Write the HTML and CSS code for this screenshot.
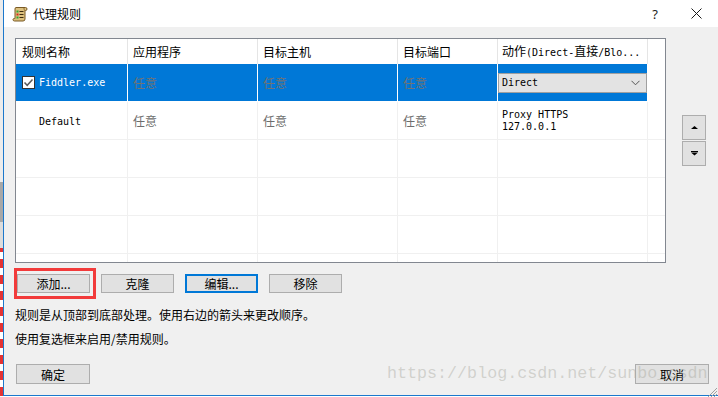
FILE: index.html
```html
<!DOCTYPE html>
<html lang="zh-CN">
<head>
<meta charset="utf-8">
<title>代理规则</title>
<link rel="stylesheet" href="styles.css">
</head>
<body>
<div class="window">
  <div class="titlebar">
    <svg class="appicon" width="16" height="16" viewBox="0 0 16 16">
      <path d="M4 1.5 H13.5 Q15 1.5 15 3 Q15 4.5 13.5 4.5 H13 V13 Q13 15 11 15 H2.5 Q1 15 1 13.5 Q1 12.5 2.5 12.5 H3 V3 Q3 1.5 4 1.5 Z" fill="#dcc07e" stroke="#7a5a24" stroke-width="1"/>
      <path d="M12 1.8 Q11.5 4 13 4.5" fill="none" stroke="#7a5a24" stroke-width="0.8"/>
      <rect x="4.5" y="4.5" width="2" height="2" fill="#2fa836"/>
      <rect x="4.5" y="7.5" width="2" height="2" fill="#d8281e"/>
      <rect x="4.5" y="10.5" width="2" height="2" fill="#2fa836"/>
      <rect x="7.5" y="5" width="4" height="1" fill="#3d2d10"/>
      <rect x="7.5" y="8" width="4" height="1" fill="#3d2d10"/>
      <rect x="7.5" y="11" width="4" height="1" fill="#3d2d10"/>
    </svg>
    <span class="title">代理规则</span>
    <span class="help">?</span>
    <svg class="close" width="11" height="11" viewBox="0 0 11 11">
      <path d="M0.5 0.5 L10.5 10.5 M10.5 0.5 L0.5 10.5" stroke="#1a1a1a" stroke-width="1"/>
    </svg>
  </div>

  <div class="content">
    <div class="toprow">
      <div class="listbox">
        <table class="grid">
          <colgroup>
            <col class="c1"><col class="c2"><col class="c3"><col class="c4"><col class="c5"><col class="c6">
          </colgroup>
          <thead>
            <tr>
              <th>规则名称</th>
              <th>应用程序</th>
              <th>目标主机</th>
              <th>目标端口</th>
              <th class="h5">动作<span class="mono">(Direct-</span>直接<span class="mono">/Blo...</span></th>
              <th class="filler"></th>
            </tr>
          </thead>
          <tbody>
            <tr class="sel">
              <td>
                <div class="namecell">
                  <span class="cb">
                    <svg width="11" height="11" viewBox="0 0 11 11"><path d="M1.5 5.5 L4.2 8.3 L9.5 2.5" fill="none" stroke="#5a5a5a" stroke-width="1.5"/></svg>
                  </span>
                  <span class="mono name">Fiddler.exe</span>
                </div>
              </td>
              <td class="any">任意</td>
              <td class="any">任意</td>
              <td class="any">任意</td>
              <td class="actcell">
                <div class="combo">
                  <span class="mono">Direct</span>
                  <svg width="9" height="6" viewBox="0 0 9 6"><path d="M0.5 0.8 L4.5 4.8 L8.5 0.8" fill="none" stroke="#555" stroke-width="1"/></svg>
                </div>
              </td>
              <td class="filler"></td>
            </tr>
            <tr>
              <td class="plain"><span class="mono">Default</span></td>
              <td class="any">任意</td>
              <td class="any">任意</td>
              <td class="any">任意</td>
              <td class="proxy"><span class="mono">Proxy HTTPS<br>127.0.0.1</span></td>
              <td class="filler"></td>
            </tr>
            <tr><td></td><td></td><td></td><td></td><td></td><td class="filler"></td></tr>
            <tr><td></td><td></td><td></td><td></td><td></td><td class="filler"></td></tr>
            <tr><td></td><td></td><td></td><td></td><td></td><td class="filler"></td></tr>
            <tr><td></td><td></td><td></td><td></td><td></td><td class="filler"></td></tr>
          </tbody>
        </table>
      </div>
      <div class="arrows">
        <button class="abtn" aria-label="上移">
          <svg width="7" height="4" viewBox="0 0 7 4"><path d="M3.5 0 L7 3 L0 3 Z" fill="#000"/></svg>
        </button>
        <button class="abtn" aria-label="下移">
          <svg width="7" height="5" viewBox="0 0 7 5"><rect x="0" y="0" width="7" height="1" fill="#000"/><path d="M0 1.5 L7 1.5 L3.5 4.5 Z" fill="#000"/></svg>
        </button>
      </div>
    </div>

    <div class="btnrow">
      <button class="btn">添加...</button>
      <button class="btn">克隆</button>
      <button class="btn focused">编辑...</button>
      <button class="btn">移除</button>
    </div>

    <p class="hint first">规则是从顶部到底部处理。使用右边的箭头来更改顺序。</p>
    <p class="hint">使用复选框来启用/禁用规则。</p>

    <div class="footer">
      <button class="btn ok">确定</button>
      <button class="btn">取消</button>
    </div>
  </div>

  <div class="highlight"></div>
  <div class="watermark">https://blog.csdn.net/sunbo_csdn</div>
</div>
<svg class="grip" width="12" height="10" viewBox="0 0 12 10">
  <path d="M11 1 L2 10 M11 4 L5 10 M11 7 L8 10" stroke="#a0a0a0" stroke-width="1"/>
</svg>
</body>
</html>
```
FILE: styles.css
```css
* { box-sizing: border-box; }

html, body {
  margin: 0;
  padding: 0;
}

body {
  width: 718px;
  height: 397px;
  overflow: hidden;
  position: relative;
  background:
    linear-gradient(180deg, #ececec 0 182px, #a8a8a8 182px 222px, #dcdcdc 222px 248px, transparent 248px),
    repeating-linear-gradient(180deg, #ffffff 0 3px, #e53333 3px 12px, #ffffff 12px 16px);
  font-family: "Noto Sans CJK SC", "Noto Sans", sans-serif;
  font-size: 12px;
  color: #000;
}

.window {
  position: relative;
  margin-left: 3px;
  width: 715px;
  height: 396px;
  background: #f0f0f0;
  border-left: 1px solid #1c78cc;
  border-bottom: 1px solid #1c78cc;
  display: flex;
  flex-direction: column;
}

/* title bar */
.titlebar {
  height: 27px;
  flex: none;
  background: #ffffff;
  display: flex;
  align-items: center;
}

.appicon {
  margin-left: 8px;
  flex: none;
}

.title {
  margin-left: 5px;
  font-size: 12px;
  line-height: 16px;
  color: #000;
}

.help {
  margin-left: auto;
  margin-right: 33px;
  font-family: "Noto Sans", sans-serif;
  font-size: 13px;
  line-height: 16px;
  color: #1a1a1a;
}

.close {
  margin-right: 16px;
  flex: none;
}

/* content */
.content {
  flex: 1;
  padding: 11px 9px 0 11px;
  display: flex;
  flex-direction: column;
}

.toprow {
  display: flex;
  align-items: flex-start;
}

.listbox {
  width: 651px;
  height: 225px;
  border: 1px solid #828790;
  background: #ffffff;
  overflow: hidden;
  flex: none;
}

.grid {
  width: 649px;
  table-layout: fixed;
  border-collapse: separate;
  border-spacing: 0;
}

.c1 { width: 112px; }
.c2 { width: 130px; }
.c3 { width: 140px; }
.c4 { width: 100px; }
.c5 { width: 150px; }
.c6 { width: 17px; }

.grid th {
  height: 25px;
  padding: 0 0 0 5px;
  font-weight: normal;
  text-align: left;
  font-size: 12px;
  line-height: 16px;
  white-space: nowrap;
  overflow: hidden;
  border-right: 1px solid #e5e5e5;
  vertical-align: middle;
}

.grid th:first-child { padding-left: 6px; }
.grid th.h5 { padding-left: 4px; }
.grid th.filler { border-right: none; }

.grid td {
  height: 38px;
  padding: 0 0 0 5px;
  border-right: 1px solid #f0f0f0;
  border-bottom: 1px solid #f0f0f0;
  vertical-align: middle;
  line-height: 16px;
  white-space: nowrap;
  overflow: hidden;
}

.grid td.filler { border-right: none; padding: 0; }

.grid tr.sel td {
  background: #0078d7;
  border-right-color: #ffffff;
  border-bottom-color: #ffffff;
}

.grid tr.sel td.filler { background: #ffffff; }

.mono {
  font-family: "DejaVu Sans Mono", "Liberation Mono", monospace;
  font-size: 10px;
}

.namecell {
  display: flex;
  align-items: center;
  padding-left: 1px;
}

.cb {
  width: 13px;
  height: 13px;
  border: 1px solid #333333;
  background: #ffffff;
  display: flex;
  align-items: center;
  justify-content: center;
  flex: none;
}

.name {
  margin-left: 4px;
  color: #ffffff;
}

.any {
  color: #6d6d6d;
  font-size: 12px;
}

.sel .any { color: #737373; }

.grid td.plain { padding-left: 23px; }

.grid td.actcell { padding: 0; }

.combo {
  width: 149px;
  height: 20px;
  border: 1px solid #a0a0a0;
  background: #e3e3e3;
  display: flex;
  align-items: center;
  justify-content: space-between;
  padding: 0 6px 0 3px;
  color: #000;
}

.grid td.proxy { padding-left: 4px; }

.proxy .mono {
  display: block;
  line-height: 12px;
}

/* arrow buttons */
.arrows {
  margin-left: 16px;
  margin-top: 77px;
  display: flex;
  flex-direction: column;
  gap: 1px;
}

.abtn {
  width: 24px;
  height: 25px;
  padding: 0;
  border: 1px solid #adadad;
  background: #e1e1e1;
  display: flex;
  align-items: center;
  justify-content: center;
}

/* buttons */
.btn {
  height: 19px;
  width: 73px;
  padding: 0;
  border: 1px solid #adadad;
  background: #e1e1e1;
  font-family: "Noto Sans CJK SC", "Noto Sans", sans-serif;
  font-size: 12px;
  line-height: 15px;
  color: #000;
}

.btn.focused {
  border: 2px solid #0078d7;
}

.btnrow {
  margin-top: 11px;
  margin-left: 2px;
  display: flex;
  gap: 11px;
}

.hint {
  margin: 8px 0 0 0;
  font-size: 12px;
  line-height: 16px;
}

.hint.first { margin-top: 14px; }

.footer {
  margin-top: 17px;
  margin-left: 1px;
  display: flex;
  justify-content: space-between;
}

.footer .btn {
  height: 20px;
  width: 74px;
}

/* overlays */
.highlight {
  position: absolute;
  left: 10px;
  top: 268px;
  width: 82px;
  height: 31px;
  border: 3px solid #f23b3b;
}

.watermark {
  position: absolute;
  left: 383px;
  top: 365px;
  font-family: "Liberation Mono", monospace;
  font-size: 16.7px;
  line-height: 18px;
  color: rgba(170, 170, 160, 0.45);
  white-space: nowrap;
  pointer-events: none;
}

.grip {
  position: absolute;
  right: 0;
  bottom: 0;
}
```
